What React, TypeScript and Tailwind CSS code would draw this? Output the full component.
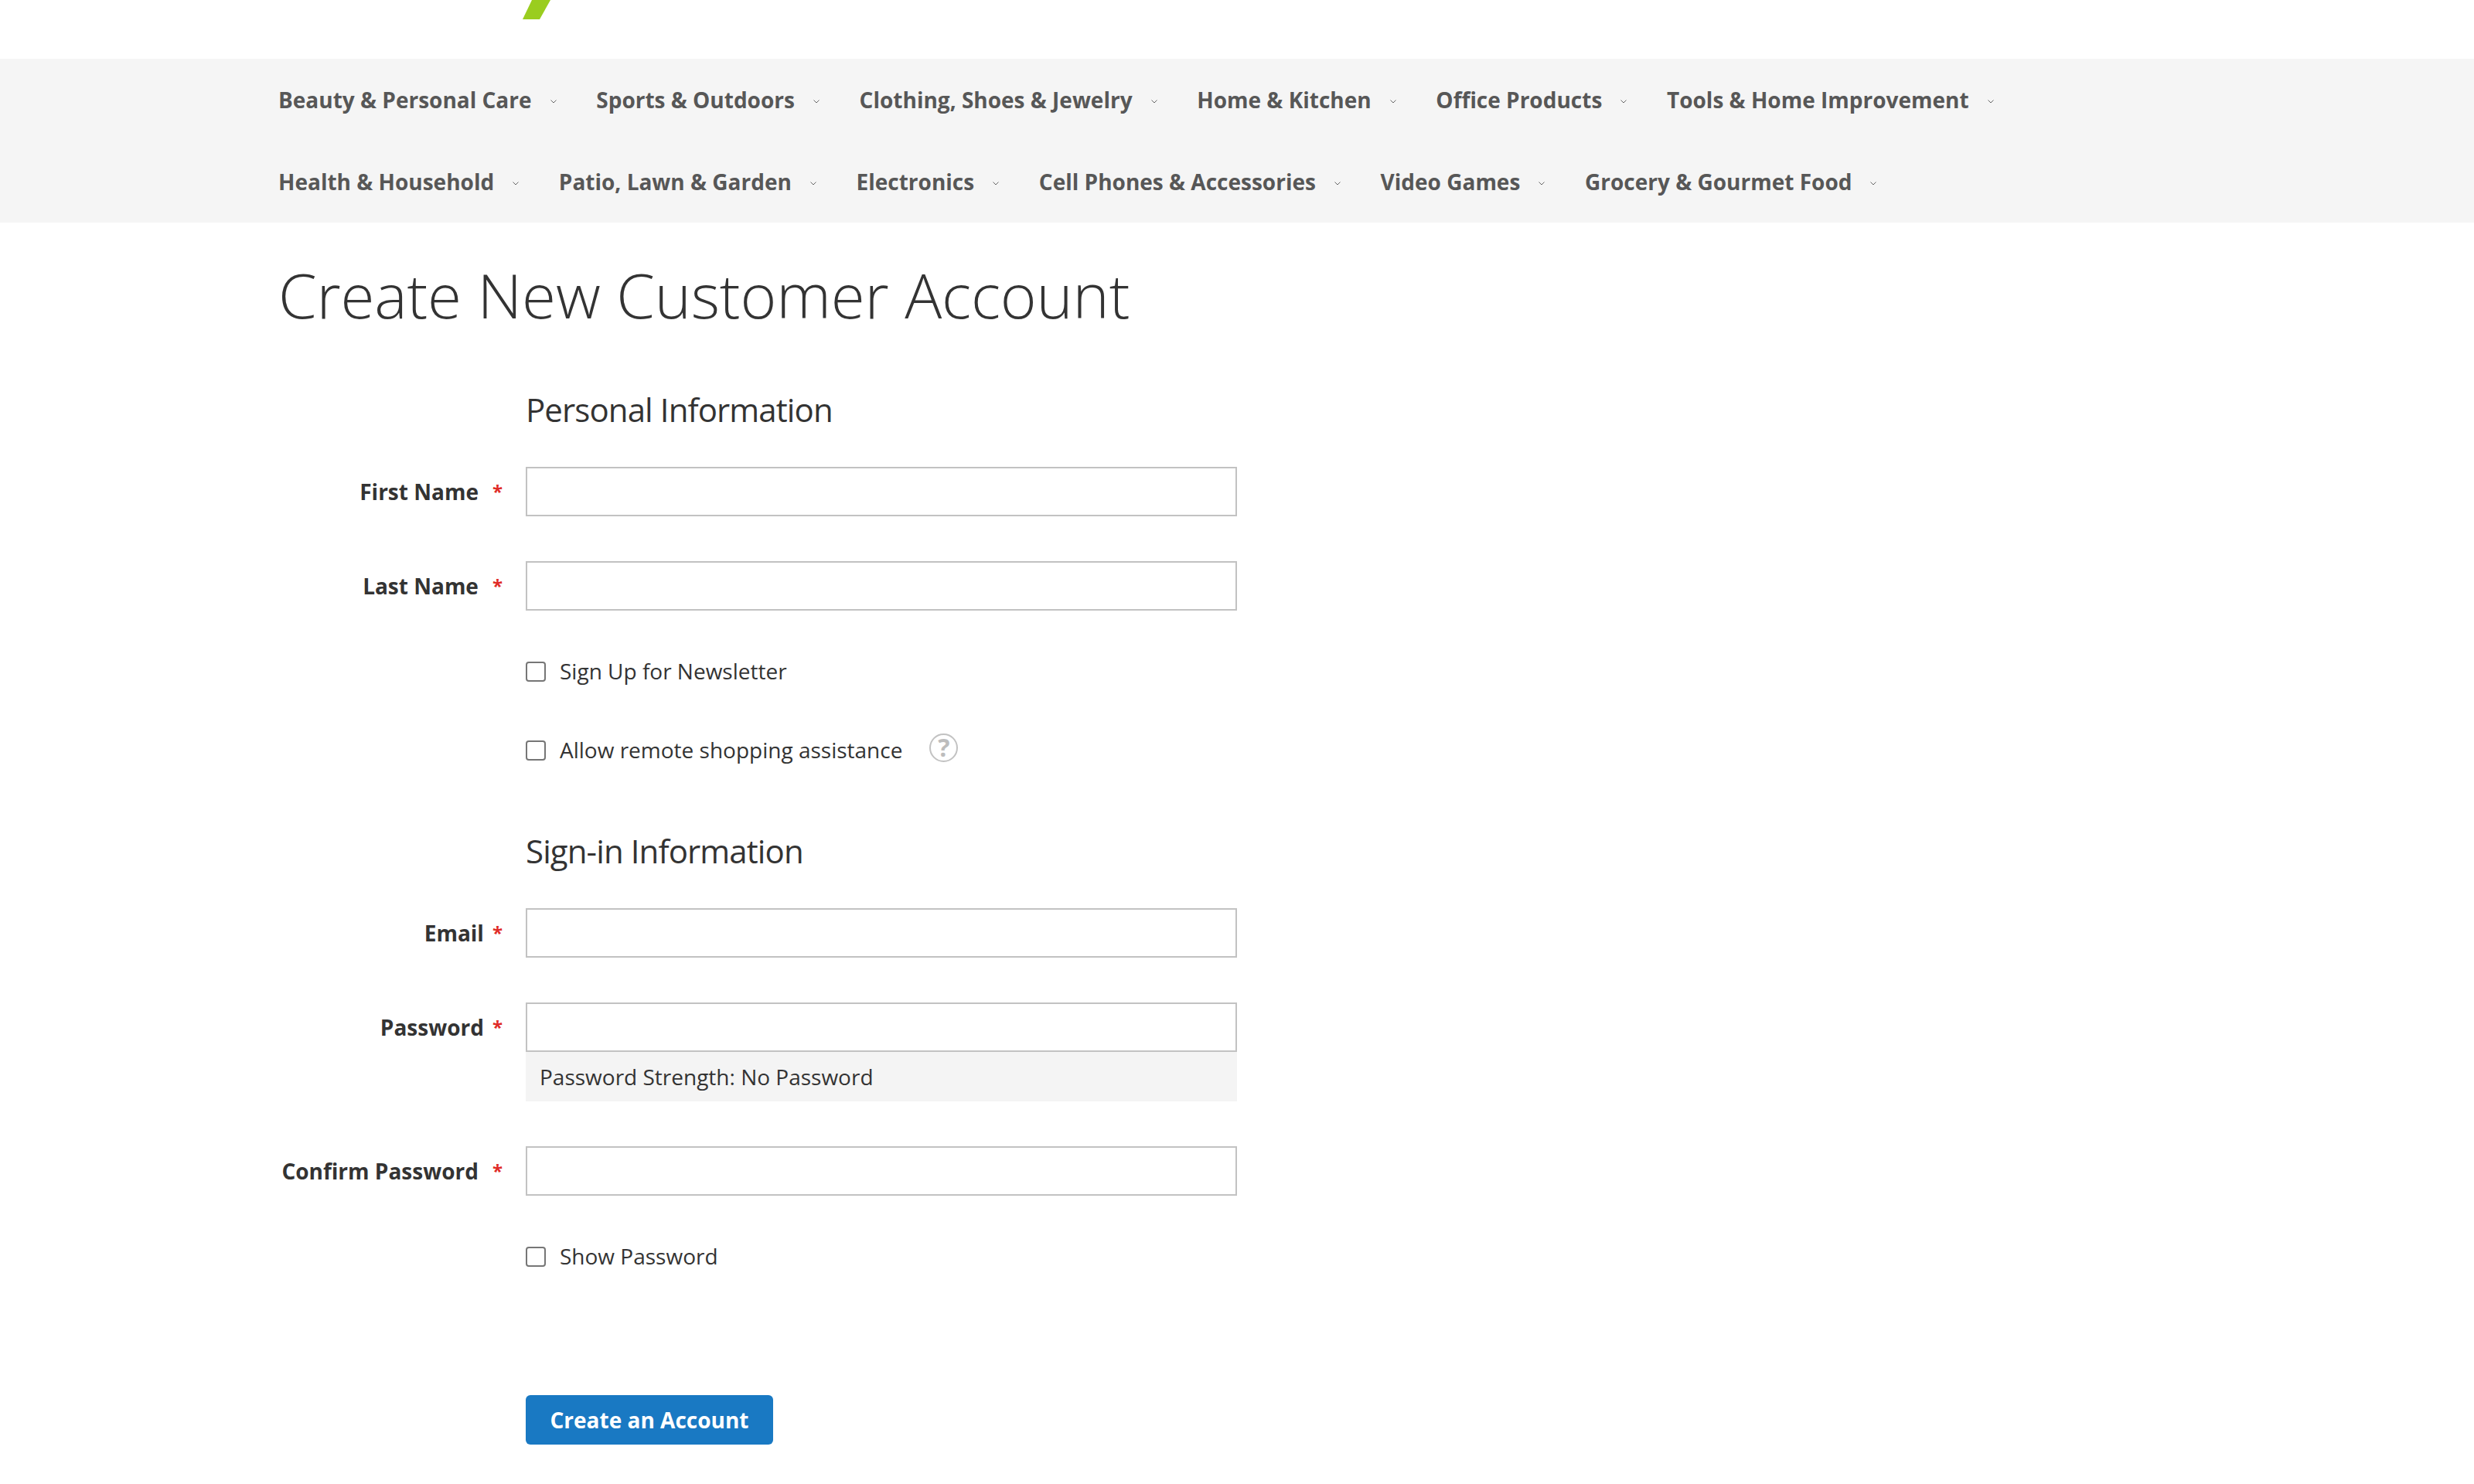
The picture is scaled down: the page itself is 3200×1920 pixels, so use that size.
import type { ReactNode } from "react";

const navItems = [
  "Beauty & Personal Care",
  "Sports & Outdoors",
  "Clothing, Shoes & Jewelry",
  "Home & Kitchen",
  "Office Products",
  "Tools & Home Improvement",
  "Health & Household",
  "Patio, Lawn & Garden",
  "Electronics",
  "Cell Phones & Accessories",
  "Video Games",
  "Grocery & Gourmet Food",
];

function Field({ label, narrow, className, children }: { label: string; narrow?: boolean; className?: string; children?: ReactNode }) {
  return (
    <div className={`flex ${className ?? ""}`}>
      <label className="flex h-16 w-[290px] items-center justify-end pb-[1px] text-[28px] font-bold text-[#333333]">
        {label}
        <span className={`text-[24px] font-bold text-[#e02b27] ${narrow ? "ml-[11px]" : "ml-[18px]"}`}>*</span>
      </label>
      <div className="ml-[30px] w-[920px]">
        <input type="text" className="block h-16 w-full border-2 border-[#c2c2c2] bg-white" />
        {children}
      </div>
    </div>
  );
}

function CheckRow({ label, className, children }: { label: string; className?: string; children?: ReactNode }) {
  return (
    <div className={`ml-[320px] flex h-[26px] items-center ${className ?? ""}`}>
      <input type="checkbox" className="h-[26px] w-[26px] appearance-none rounded-[4px] border-2 border-[#767676] bg-white" />
      <span className="ml-[18px] pb-[3px] text-[28px] text-[#333333]">{label}</span>
      {children}
    </div>
  );
}

export default function App() {
  return (
    <div className="h-[1920px] w-full overflow-hidden bg-white font-['Open_Sans',sans-serif]">
      <header className="h-[76px]">
        <svg className="ml-[676px] block" width="36" height="25" viewBox="0 0 36 25">
          <polygon points="12,0 36,0 22,25 0,25" fill="#9acd1f" />
        </svg>
      </header>

      <nav className="bg-[#f5f5f5]">
        <ul className="mx-auto flex w-[2560px] flex-wrap px-10">
          {navItems.map((item) => (
            <li key={item} className="mr-[51.7px] flex h-[106px] items-center">
              <span className="pb-[1px] text-[28px] font-bold text-[#575757]">{item}</span>
              <svg className="ml-[24px] mt-[5px]" width="8" height="5" viewBox="0 0 8 5" fill="none">
                <polyline points="0.5,0.5 4,4 7.5,0.5" stroke="#666666" strokeWidth="1" />
              </svg>
            </li>
          ))}
        </ul>
      </nav>

      <main className="mx-auto w-[2560px] px-10">
        <h1 className="mt-[34px] text-[80px] leading-[118px] font-light tracking-[-0.15px] text-[#333333]">Create New Customer Account</h1>

        <form className="mt-[65px]">
          <h2 className="ml-[320px] text-[42px] leading-[50px] font-normal tracking-[-0.9px] text-[#333333]">Personal Information</h2>
          <Field label="First Name" className="mt-[49px]" />
          <Field label="Last Name" className="mt-[58px]" />
          <CheckRow label="Sign Up for Newsletter" className="mt-[66px]" />
          <CheckRow label="Allow remote shopping assistance" className="mt-[76px]">
            <span className="ml-[35px] flex h-[37px] w-[37px] -translate-y-[4px] items-center justify-center rounded-full border-2 border-[#c2c2c2] text-[32px] font-bold text-[#bdbdbd]">
              ?
            </span>
          </CheckRow>

          <h2 className="ml-[320px] mt-[92px] text-[42px] leading-[50px] font-normal tracking-[-0.9px] text-[#333333]">Sign-in Information</h2>
          <Field label="Email" narrow className="mt-[49px]" />
          <Field label="Password" narrow className="mt-[58px]">
            <div className="flex h-16 items-center bg-[#f4f4f4] pb-[1px] pl-[18px] text-[28px] text-[#333333]">Password Strength: No Password</div>
          </Field>
          <Field label="Confirm Password" className="mt-[58px]" />
          <CheckRow label="Show Password" className="mt-[66px]" />

          <button type="button" className="ml-[320px] mt-[166px] h-16 w-[320px] rounded-[6px] bg-[#1979c3] pb-[1px] text-[28px] font-bold text-white">
            Create an Account
          </button>
        </form>
      </main>
    </div>
  );
}
